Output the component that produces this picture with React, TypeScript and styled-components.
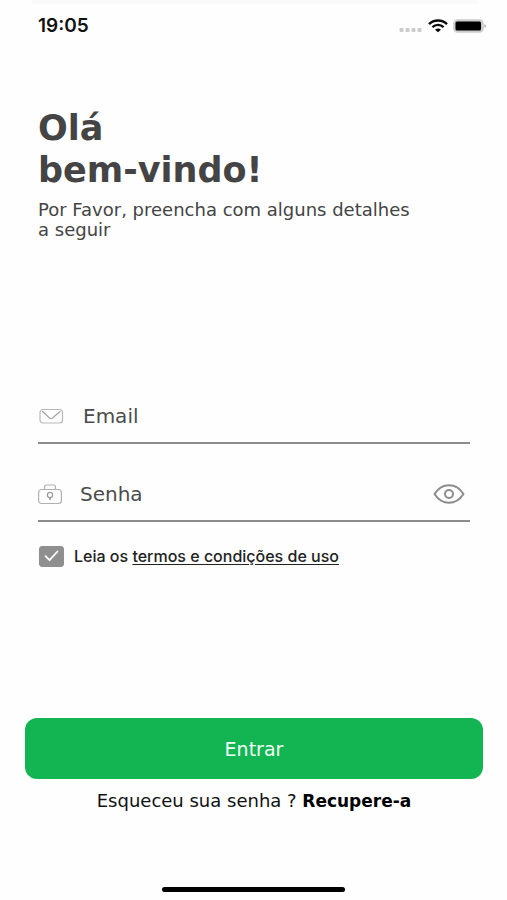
import React, { useState } from "react";
import styled, { createGlobalStyle } from "styled-components";

const GlobalStyle = createGlobalStyle`
  *, *::before, *::after { box-sizing: border-box; }
  body { margin: 0; background: #fefefe; }
  button, input { font: inherit; }
`;

const display = `"DejaVu Sans", Verdana, sans-serif`;
const system = `Inter, "Liberation Sans", sans-serif`;

const Screen = styled.div`
  display: flex;
  flex-direction: column;
  min-height: 100vh;
  background: #fefefe;
  color: #444444;
  font-family: ${display};
`;

const TopEdge = styled.div`
  height: 4px;
  margin: 0 28px 0 32px;
  background: #fafafa;
`;

const StatusBar = styled.header`
  display: flex;
  align-items: center;
  justify-content: space-between;
  height: 44px;
  padding: 0 20px 0 38px;
  color: #111111;
  font-family: ${system};
`;

const Clock = styled.time`
  font-size: 19px;
  font-weight: 600;
  line-height: 24px;
`;

const StatusIcons = styled.div`
  display: flex;
  align-items: center;
  gap: 5px;
`;

const Form = styled.form`
  display: flex;
  flex: 1;
  flex-direction: column;
  padding: 0 24px 0 25px;
`;

const Content = styled.div`
  padding: 59px 13px 0;
`;

const Title = styled.h1`
  margin: 0;
  font-size: 35px;
  font-weight: 700;
  line-height: 42px;
`;

const Subtitle = styled.p`
  max-width: 384px;
  margin: 9px 0 0;
  font-size: 18px;
  line-height: 20px;
`;

const Fields = styled.div`
  display: flex;
  flex-direction: column;
  gap: 24px;
  margin-top: 150px;
`;

const Field = styled.div<{ $gap: number }>`
  display: flex;
  align-items: center;
  gap: ${(p) => p.$gap}px;
  height: 54px;
  border-bottom: 2px solid #8c8c8c;
`;

const TextInput = styled.input`
  flex: 1;
  min-width: 0;
  height: 100%;
  padding: 0;
  border: 0;
  outline: 0;
  background: transparent;
  color: #444444;
  font-size: 20px;
  &::placeholder { color: #4c4c4c; opacity: 1; }
`;

const IconButton = styled.button`
  display: flex;
  margin-right: 5px;
  padding: 0;
  border: 0;
  background: none;
  cursor: pointer;
`;

const Terms = styled.div`
  display: flex;
  align-items: center;
  gap: 10px;
  margin-top: 23px;
  padding-left: 1px;
  color: #222222;
  font-family: ${system};
  font-size: 16px;
  font-weight: 500;
  line-height: 22px;
  a { color: inherit; text-underline-offset: 2px; }
`;

const CheckBox = styled.input`
  appearance: none;
  width: 25px;
  height: 21px;
  margin: 0;
  border: 1px solid #8f8f8f;
  border-radius: 3px;
  background: #ffffff;
  cursor: pointer;
  &:checked { background: #8f8f8f; }
`;

const CheckWrap = styled.span`
  display: grid;
  place-items: center;
  > * { grid-area: 1 / 1; }
  svg { pointer-events: none; }
`;

const Footer = styled.div`
  display: flex;
  flex-direction: column;
  margin-top: auto;
  padding-bottom: 76px;
`;

const Submit = styled.button`
  height: 61px;
  border: 0;
  border-radius: 12px;
  background: #12b551;
  color: #f2fff6;
  font-size: 19px;
  cursor: pointer;
`;

const Recover = styled.p`
  margin: 12px 0 0;
  color: #111111;
  font-size: 18px;
  line-height: 20px;
  text-align: center;
  a { color: #000000; font-size: 17px; font-weight: 700; text-decoration: none; }
`;

const HomeIndicator = styled.div`
  width: 36%;
  height: 5px;
  margin: 0 auto 8px;
  border-radius: 3px;
  background: #000000;
`;

const SignalIcon = () => (
  <svg width="24" height="18" viewBox="0 0 24 18" fill="#cccccc" aria-hidden="true">
    {[0, 6, 12, 18].map((x) => (
      <rect key={x} x={x + 0.5} y="11" width="4" height="4" rx="1" />
    ))}
  </svg>
);

const WifiIcon = () => (
  <svg width="20" height="14" viewBox="0 0 20 14" fill="none" stroke="#0a0a0a" aria-hidden="true">
    <path d="M1 5.2C6 .3 14 .3 19 5.2" strokeWidth="2.5" />
    <path d="M4.4 8.1c3.2-3 8-3 11.2 0" strokeWidth="2.3" />
    <path d="M7 10.7c1.8-1.5 4.2-1.5 6 0l-3 2.6z" fill="#0a0a0a" stroke="none" />
  </svg>
);

const BatteryIcon = () => (
  <svg width="34" height="14" viewBox="0 0 34 14" aria-hidden="true">
    <rect x="1" y="1" width="29" height="12" rx="3.5" fill="#cccccc" stroke="#cccccc" strokeWidth="1.6" />
    <rect x="2.5" y="2.5" width="25.5" height="9" rx="1.5" fill="#000000" />
    <path d="M31.5 5v4c2-.7 2-3.3 0-4z" fill="#b0b0b0" />
  </svg>
);

const MailIcon = () => (
  <svg width="26" height="24" viewBox="0 0 26 24" fill="none" stroke="#b8b8b8" strokeWidth="1.2" aria-hidden="true">
    <rect x="2" y="5.5" width="22.5" height="13.5" rx="3" />
    <path d="m4.5 7.5 7 6.5q1.500 1.200 3 0l7.500-6.500" stroke="#a4a4a4" strokeLinecap="round" />
  </svg>
);

const LockIcon = () => (
  <svg width="24" height="24" viewBox="0 0 24 24" fill="none" stroke="#b0b0b0" strokeWidth="1.2" aria-hidden="true">
    <rect x=".6" y="7.5" width="22.8" height="14" rx="3" />
    <path d="M6.500 7.500V5q0-2 2-2h7q2 0 2 2v2.500" />
    <circle cx="12" cy="13" r="2.6" stroke="#999999" />
    <path d="M12 15.500v2.500" stroke="#999999" strokeWidth="1.6" />
  </svg>
);

const EyeIcon = () => (
  <svg width="32" height="24" viewBox="0 0 32 24" fill="none" stroke="#8c8c8c" strokeWidth="2" aria-hidden="true">
    <path d="M1.500 12C9 .3 23 .3 30.500 12 23 23.700 9 23.700 1.500 12z" strokeLinejoin="round" />
    <circle cx="16" cy="12" r="4" />
  </svg>
);

const CheckIcon = () => (
  <svg width="15" height="12" viewBox="0 0 15 12" fill="none" stroke="#ffffff" strokeWidth="1.8" aria-hidden="true">
    <path d="m1.500 6.200 4 4L13.500 1.500" strokeLinecap="round" strokeLinejoin="round" />
  </svg>
);

export default function App() {
  const [showPassword, setShowPassword] = useState(false);

  return (
    <Screen>
      <GlobalStyle />
      <TopEdge />
      <StatusBar>
        <Clock>19:05</Clock>
        <StatusIcons>
          <SignalIcon />
          <WifiIcon />
          <BatteryIcon />
        </StatusIcons>
      </StatusBar>
      <Form onSubmit={(e) => e.preventDefault()}>
        <Content>
          <Title>
            Olá
            <br />
            bem-vindo!
          </Title>
          <Subtitle>Por Favor, preencha com alguns detalhes a seguir</Subtitle>
          <Fields>
            <Field $gap={19}>
              <MailIcon />
              <TextInput type="email" placeholder="Email" aria-label="Email" />
            </Field>
            <Field $gap={18}>
              <LockIcon />
              <TextInput type={showPassword ? "text" : "password"} placeholder="Senha" aria-label="Senha" />
              <IconButton type="button" aria-label="Mostrar senha" onClick={() => setShowPassword(!showPassword)}>
                <EyeIcon />
              </IconButton>
            </Field>
          </Fields>
          <Terms>
            <CheckWrap>
              <CheckBox id="terms" type="checkbox" defaultChecked />
              <CheckIcon />
            </CheckWrap>
            <span>
              <label htmlFor="terms">Leia os </label>
              <a href="#termos">termos e condições de uso</a>
            </span>
          </Terms>
        </Content>
        <Footer>
          <Submit type="submit">Entrar</Submit>
          <Recover>
            Esqueceu sua senha ? <a href="#recuperar">Recupere-a</a>
          </Recover>
        </Footer>
      </Form>
      <HomeIndicator />
    </Screen>
  );
}
